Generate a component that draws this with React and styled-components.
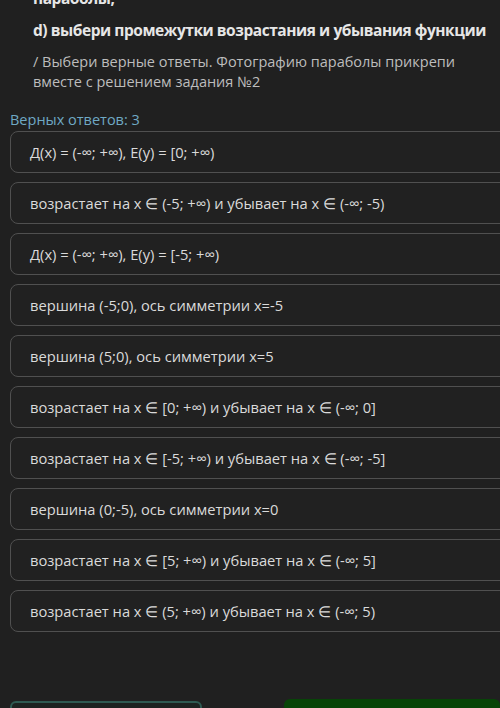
import React from 'react';
import styled, { createGlobalStyle } from 'styled-components';

const GlobalStyle = createGlobalStyle`
  html, body {
    margin: 0;
    padding: 0;
    background: #202020;
    overflow: hidden;
  }
  body {
    font-family: "Open Sans", "Noto Sans", sans-serif;
  }
`;

const Page = styled.div`
  width: 500px;
  height: 708px;
  overflow: hidden;
  background: #202020;
  padding: 0 0 0 10px;
  box-sizing: border-box;
`;

const Question = styled.div`
  padding-left: 23px;
  margin-top: -14px;
`;

const Title = styled.div`
  color: #e6e6e6;
  font-weight: 700;
  font-size: 15.5px;
  letter-spacing: -0.45px;
  line-height: 24px;
  white-space: nowrap;
  margin-top: ${p => p.$gap || 0}px;
`;

const Hint = styled.div`
  color: #bdbdbd;
  font-size: 14.5px;
  line-height: 20px;
  margin-top: 10px;
  padding-right: 30px;
`;

const Counter = styled.div`
  color: #6fa9c4;
  font-size: 14.5px;
  line-height: 20px;
  margin-top: 18px;
`;

const Options = styled.div`
  display: flex;
  flex-direction: column;
  gap: 9px;
  margin-top: 1px;
`;

const Option = styled.div`
  width: 520px;
  height: 42px;
  box-sizing: border-box;
  border: 1.5px solid #505050;
  border-radius: 8px;
  background: #212121;
  display: flex;
  align-items: center;
  padding-left: 19px;
  color: #dadada;
  font-size: 14.7px;
`;

const Footer = styled.div`
  display: flex;
  align-items: flex-start;
  margin-top: 67px;
`;

const BackButton = styled.div`
  width: 213px;
  height: 40px;
  box-sizing: border-box;
  border: 2px solid #2f5a52;
  border-radius: 6px;
  background: #1d2321;
  margin-top: 2px;
`;

const NextButton = styled.div`
  width: 240px;
  height: 40px;
  margin-left: 82px;
  border-radius: 6px;
  background: #074407;
`;

const options = [
  'Д(x) = (-∞; +∞), E(y) = [0; +∞)',
  'возрастает на x ∈ (-5; +∞) и убывает на x ∈ (-∞; -5)',
  'Д(x) = (-∞; +∞), E(y) = [-5; +∞)',
  'вершина (-5;0), ось симметрии x=-5',
  'вершина (5;0), ось симметрии x=5',
  'возрастает на x ∈ [0; +∞) и убывает на x ∈ (-∞; 0]',
  'возрастает на x ∈ [-5; +∞) и убывает на x ∈ (-∞; -5]',
  'вершина (0;-5), ось симметрии x=0',
  'возрастает на x ∈ [5; +∞) и убывает на x ∈ (-∞; 5]',
  'возрастает на x ∈ (5; +∞) и убывает на x ∈ (-∞; 5)',
];

export default function App() {
  return (
    <>
      <GlobalStyle />
      <Page>
        <Question>
          <Title>параболы,</Title>
          <Title $gap={8}>d) выбери промежутки возрастания и убывания функции</Title>
          <Hint>/ Выбери верные ответы. Фотографию параболы прикрепи вместе с решением задания №2</Hint>
        </Question>
        <Counter>Верных ответов: 3</Counter>
        <Options>
          {options.map(text => (
            <Option key={text}>{text}</Option>
          ))}
        </Options>
        <Footer>
          <BackButton />
          <NextButton />
        </Footer>
      </Page>
    </>
  );
}
